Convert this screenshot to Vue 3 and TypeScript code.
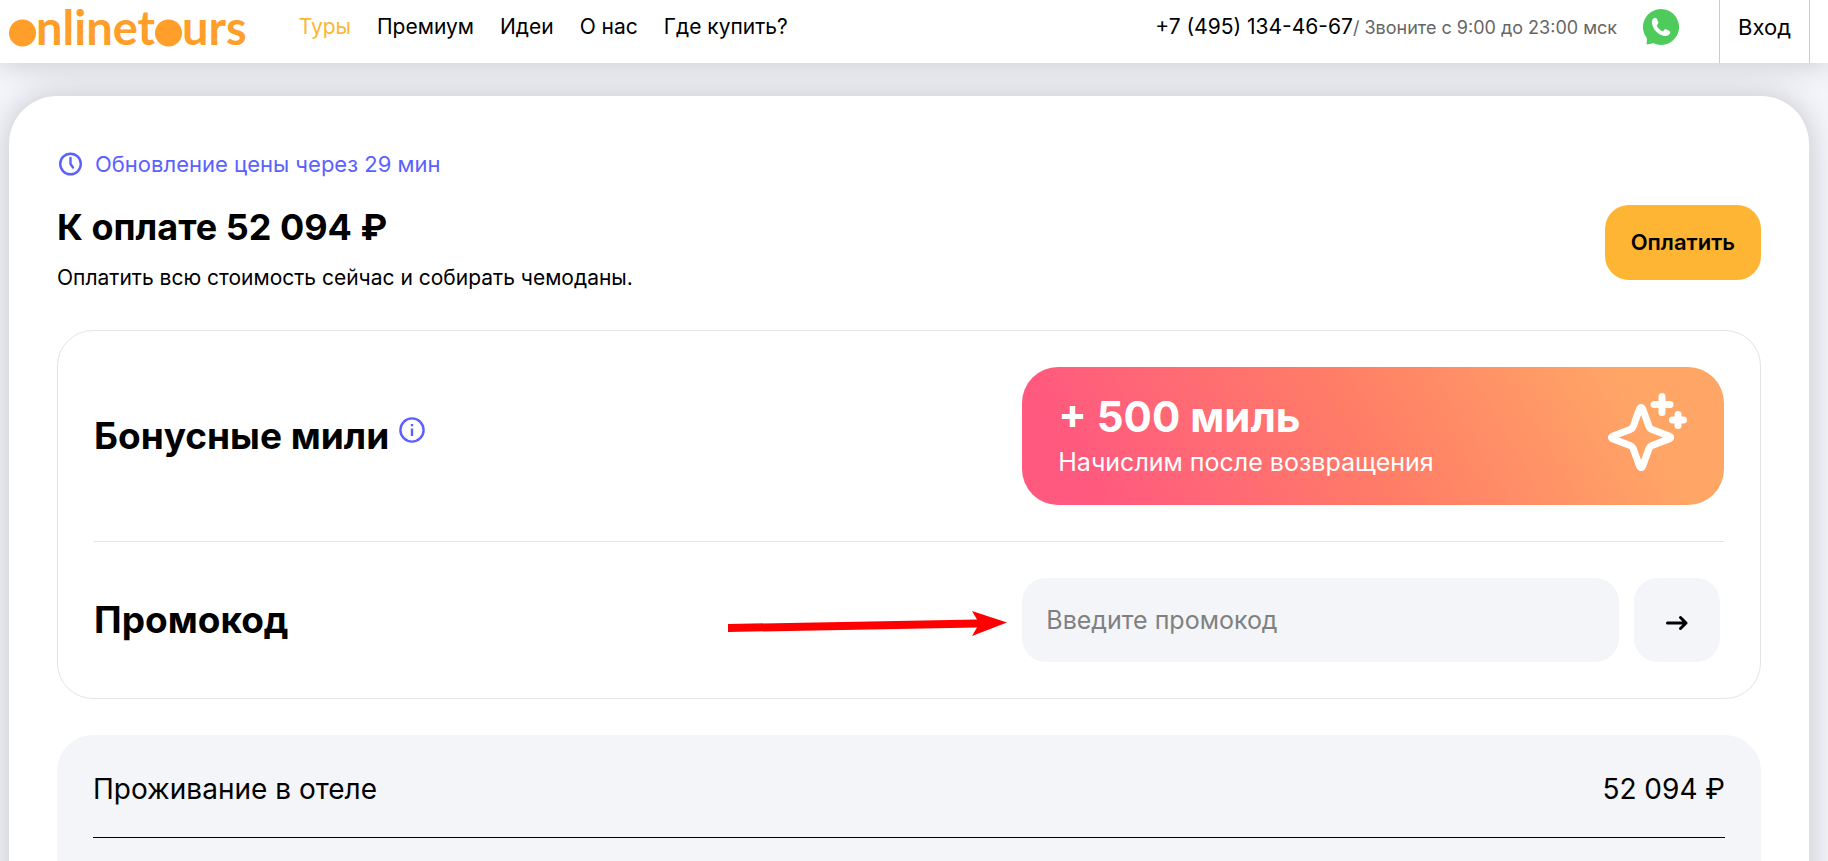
<script setup lang="ts">
import { ref } from 'vue'

interface NavItem {
  label: string
  active?: boolean
}

const navItems: NavItem[] = [
  { label: 'Туры', active: true },
  { label: 'Премиум' },
  { label: 'Идеи' },
  { label: 'О нас' },
  { label: 'Где купить?' },
]

const total = '52 094 ₽'
const promoCode = ref('')
</script>

<template>
  <div class="page">
    <header class="header">
      <a class="logo" href="#"><span class="dot">o</span>nlinet<span class="dot">o</span>urs</a>
      <nav class="nav">
        <a v-for="item in navItems" :key="item.label" href="#" :class="{ active: item.active }">{{ item.label }}</a>
      </nav>
      <div class="contact">
        <a class="phone" href="tel:+74951344667">+7 (495) 134-46-67</a>
        <span class="hours">/ Звоните с 9:00 до 23:00 мск</span>
      </div>
      <a class="whatsapp" href="#" aria-label="WhatsApp">
        <svg width="36" height="36" viewBox="0 0 36 36">
          <path d="M18 0a18 18 0 1 1-7.6 34.3L3.6 35.6 4 29.4A18 18 0 0 1 18 0z" fill="#4fcb5c" />
          <path d="M10.4 9.6c1.2-1.2 2.8-1 3.5.4l1.3 2.8c.5 1.1.1 2-1 3-.5.5-.5.9-.2 1.5 1.2 2.2 2.9 3.8 5 4.8.6.3 1.1.2 1.5-.4.9-1.3 1.8-1.6 3-1.1l2.6 1.2c1.4.7 1.5 2.1.5 3.3-1.3 1.6-3.3 2.3-5.500 1.800C14.700 25.500 10.300 20.800 9.100 15c-.5-2.200-.1-4.100 1.300-5.400z" fill="#fff" />
        </svg>
      </a>
      <a class="login" href="#">Вход</a>
    </header>

    <main class="card">
      <p class="timer">
        <svg width="26" height="26" viewBox="0 0 26 26" fill="none" stroke="currentColor" stroke-width="2.4" stroke-linecap="round" stroke-linejoin="round" aria-hidden="true">
          <circle cx="13.5" cy="13" r="10.3" />
          <path d="M13.5 7v6l2.5 3.5" />
        </svg>
        Обновление цены через 29 мин
      </p>

      <section class="payment">
        <div>
          <h1>К оплате {{ total }}</h1>
          <p>Оплатить всю стоимость сейчас и собирать чемоданы.</p>
        </div>
        <button class="pay" type="button">Оплатить</button>
      </section>

      <section class="offers">
        <div class="row">
          <h2>
            Бонусные мили
            <button class="info" type="button" aria-label="О бонусных милях">
              <svg width="26" height="26" viewBox="0 0 26 26" fill="none" stroke="currentColor" stroke-width="2.4">
                <circle cx="13" cy="13" r="11.6" />
                <path d="M13 11.5v7.5M13 7v2.2" />
              </svg>
            </button>
          </h2>
          <div class="banner">
            <div>
              <strong>+ 500 миль</strong>
              <span>Начислим после возвращения</span>
            </div>
            <svg width="80" height="80" viewBox="0 0 80 80" fill="none" stroke="#fff" stroke-width="7" stroke-linecap="round" stroke-linejoin="round" aria-hidden="true">
              <path d="M31.5 17q1.6-3 3.2 0L41 34.5q.8 2.2 3 3L61 44q3.2 1.5 0 3L44 53.5q-2.2.8-3 3L34.7 74q-1.6 3-3.2 0L25.2 56.5q-.8-2.2-3-3L5 47q-3.2-1.5 0-3l17.2-6.5q2.2-.8 3-3z" />
              <path d="M54 4.5v16M46 12.5h16M70 22.5v11M64.5 28h11" />
            </svg>
          </div>
        </div>

        <form class="row promo" @submit.prevent>
          <h2><label for="promo">Промокод</label></h2>
          <div class="fields">
            <input id="promo" v-model="promoCode" type="text" placeholder="Введите промокод" />
            <button type="submit" aria-label="Применить промокод">
              <svg width="24" height="16" viewBox="0 0 24 16" fill="none" stroke="currentColor" stroke-width="3" stroke-linecap="round" stroke-linejoin="round">
                <path d="M2.5 8h18.5M15.5 2.500L21 8l-5.500 5.500" />
              </svg>
            </button>
            <svg class="pointer" width="280" height="28" viewBox="0 0 280 28" aria-hidden="true">
              <path d="M0 14L249 9.5 244 1 279 12.5 244 26 249 17.5 0 22z" fill="#f00" />
            </svg>
          </div>
        </form>
      </section>

      <section class="summary">
        <dl>
          <dt>Проживание в отеле</dt>
          <dd>{{ total }}</dd>
        </dl>
      </section>
    </main>
  </div>
</template>

<style>
body {
  margin: 0;
  background: #f4f5fa;
}
</style>

<style scoped>
.page {
  height: 100vh;
  overflow: hidden;
  color: #000;
  background: #f4f5fa;
  font-family: Inter, "Noto Sans", sans-serif;
  font-size: 22px;
  line-height: 32px;
}

h1,
h2,
p,
dl,
dd {
  margin: 0;
}

a {
  color: inherit;
  text-decoration: none;
}

button {
  border: 0;
  padding: 0;
  color: inherit;
  font: inherit;
  cursor: pointer;
}

svg {
  display: block;
  flex: none;
}

.header {
  display: flex;
  align-items: center;
  height: 63px;
  padding: 0 18px 0 9px;
  background: #fff;
  box-shadow: 0 0 32px rgba(0, 0, 0, 0.2);
}

.header > :not(.login) {
  margin-bottom: 9px;
}

.logo {
  color: #ff9e29;
  font-family: Lato, sans-serif;
  font-size: 47px;
  font-weight: 700;
  line-height: 54px;
}

.dot {
  display: inline-block;
  background: radial-gradient(circle at 50% 33px, currentColor 13px, transparent 14px);
}

.nav {
  display: flex;
  gap: 26px;
  margin-left: 52px;
  font-size: 21px;
}

.active {
  color: #ffb534;
}

.contact {
  margin-left: auto;
}

.phone {
  font-size: 21px;
}

.hours {
  color: #666;
  font-size: 18px;
}

.whatsapp {
  margin: 0 40px 0 26px;
}

.login {
  box-sizing: border-box;
  height: 63px;
  padding: 11px 18px;
  border: solid #ccc;
  border-width: 0 1px;
}

.card {
  box-sizing: border-box;
  min-height: 100vh;
  margin: 33px 19px 0 9px;
  padding: 52px 48px;
  border-radius: 48px;
  background: #fff;
  box-shadow: 0 0 32px rgba(0, 0, 0, 0.2);
}

.timer {
  display: flex;
  align-items: center;
  gap: 12px;
  color: #5b61ff;
}

.payment {
  display: flex;
  align-items: flex-start;
  justify-content: space-between;
  margin-top: 21px;
}

h1,
h2 {
  font-size: 37px;
  font-weight: 700;
  line-height: 52px;
}

h1 {
  font-size: 36px;
}

.payment p {
  margin-top: 9px;
  font-size: 21px;
}

.pay {
  margin-top: 4px;
  padding: 21px 26px 22px;
  border-radius: 24px;
  background: #ffb534;
  font-weight: 600;
}

.offers {
  margin-top: 36px;
  padding: 0 36px;
  border: 1px solid #e4e4e4;
  border-radius: 36px;
}

.row {
  display: grid;
  grid-template-columns: 1139fr 861fr;
  align-items: center;
  padding: 36px 0;
}

.promo {
  border-top: 1px solid #e4e4e4;
}

h2 {
  display: flex;
  align-items: center;
  gap: 10px;
}

.info {
  margin-bottom: 12px;
  color: #5b61ff;
  background: none;
}

.banner {
  display: flex;
  align-items: center;
  justify-content: space-between;
  box-sizing: border-box;
  min-height: 138px;
  padding: 0 36px;
  border-radius: 36px;
  color: #fff;
  background: linear-gradient(60deg, #ff597f 10%, #ff7e66 50%, #ffa666 86%);
}

.banner strong,
.banner span {
  display: block;
}

.banner strong {
  font-size: 42px;
  line-height: 52px;
}

.banner span {
  font-size: 25px;
  line-height: 38px;
}

.banner svg {
  margin-bottom: 9px;
}

.fields {
  position: relative;
  display: flex;
  gap: 15px;
  padding-right: 4px;
}

input {
  flex: 1;
  box-sizing: border-box;
  min-width: 0;
  height: 84px;
  padding: 0 24px;
  border: 0;
  border-radius: 24px;
  background: #f4f5f9;
  font: inherit;
  font-size: 25px;
}

input::placeholder {
  color: #808080;
}

.fields button {
  display: grid;
  place-items: center;
  width: 86px;
  padding-top: 6px;
  border-radius: 24px;
  background: #f4f5f9;
}

.pointer {
  position: absolute;
  top: 32px;
  right: calc(100% + 14px);
}

.summary {
  min-height: 200px;
  margin-top: 36px;
  padding: 36px;
  border-radius: 36px;
  background: #f4f5f9;
}

dl {
  display: flex;
  justify-content: space-between;
  padding-bottom: 30px;
  border-bottom: 1px solid #000;
  font-size: 28px;
  line-height: 36px;
}
</style>
